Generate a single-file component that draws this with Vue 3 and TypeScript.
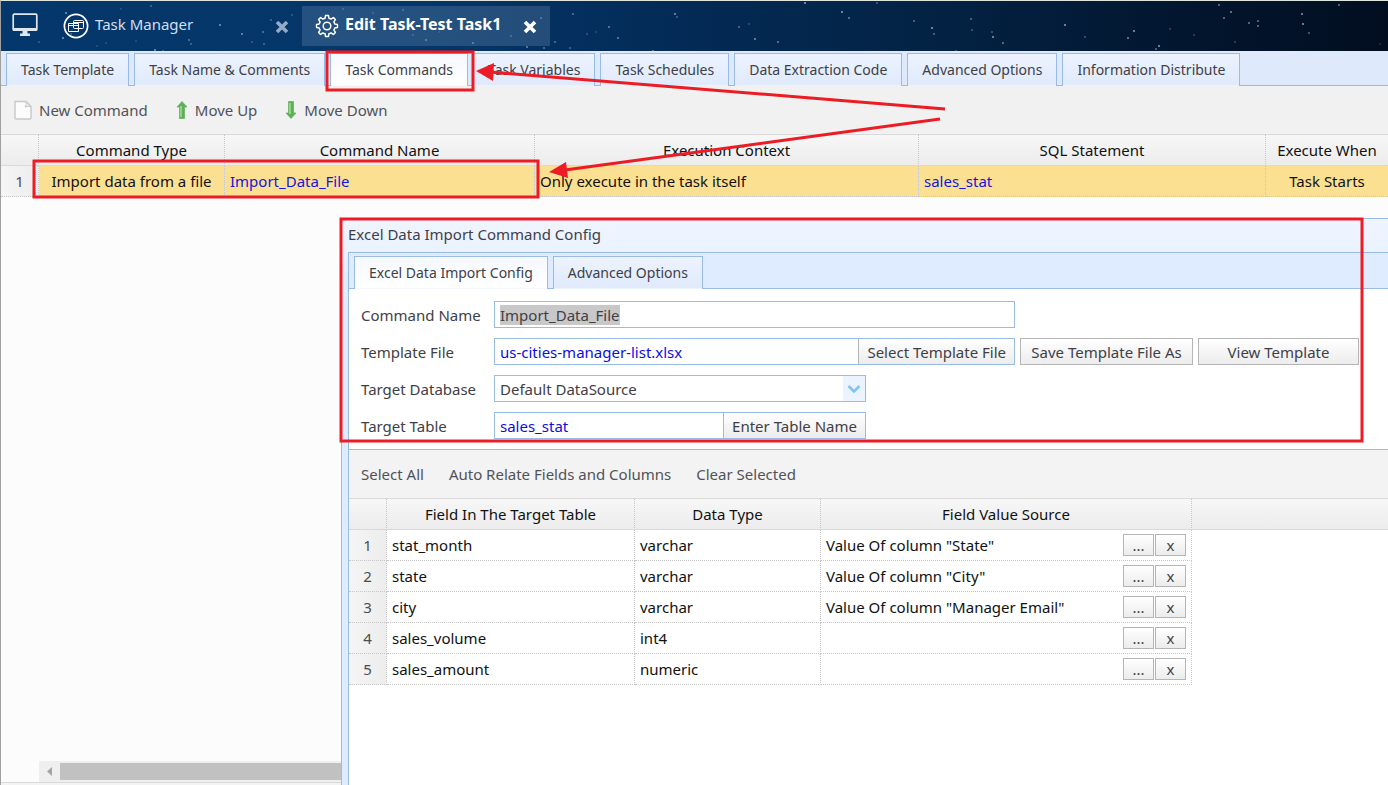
<script setup lang="ts">
import { onMounted, ref } from 'vue'

interface FieldRow {
  name: string
  type: string
  source: string
}

const taskTabs: string[] = [
  'Task Template',
  'Task Name & Comments',
  'Task Commands',
  'Task Variables',
  'Task Schedules',
  'Data Extraction Code',
  'Advanced Options',
  'Information Distribute',
]
const activeTab = ref('Task Commands')

const configTabs: string[] = ['Excel Data Import Config', 'Advanced Options']
const activeConfigTab = ref('Excel Data Import Config')

const fields: FieldRow[] = [
  { name: 'stat_month', type: 'varchar', source: 'Value Of column "State"' },
  { name: 'state', type: 'varchar', source: 'Value Of column "City"' },
  { name: 'city', type: 'varchar', source: 'Value Of column "Manager Email"' },
  { name: 'sales_volume', type: 'int4', source: '' },
  { name: 'sales_amount', type: 'numeric', source: '' },
]

const commandName = ref('Import_Data_File')
const templateFile = ref('us-cities-manager-list.xlsx')
const targetTable = ref('sales_stat')
const nameInput = ref<HTMLInputElement | null>(null)

// x, y, opacity of each star in the header sky
const stars: number[][] = [
  [65, 12, 0.7], [62, 37, 0.7], [70, 33, 0.4], [150, 5, 0.4], [219, 24, 0.7], [241, 33, 0.7],
  [270, 19, 0.4], [262, 31, 0.5], [251, 41, 0.3], [263, 43, 0.4], [188, 39, 0.5], [190, 43, 0.4],
  [154, 49, 0.7], [162, 50, 0.4], [135, 40, 0.2], [105, 42, 0.2], [120, 8, 0.2], [291, 14, 0.3],
  [38, 41, 0.3], [96, 45, 0.2], [342, 8, 0.3], [347, 22, 0.3], [372, 12, 0.3], [402, 9, 0.4],
  [425, 39, 0.6], [438, 31, 0.2], [412, 34, 0.3], [472, 42, 0.6], [510, 35, 0.4], [526, 46, 0.6],
  [543, 47, 0.5], [540, 17, 0.5], [572, 13, 0.5], [554, 41, 0.5], [569, 47, 0.4], [608, 26, 0.6],
  [617, 37, 0.6], [586, 33, 0.3], [595, 31, 0.2], [674, 13, 0.7], [676, 16, 0.4], [652, 50, 0.6],
  [738, 26, 0.5], [754, 38, 0.7], [748, 23, 0.3], [777, 41, 0.6], [804, 2, 0.8], [841, 11, 0.8],
  [848, 17, 0.6], [876, 2, 0.4], [913, 20, 0.5], [931, 27, 0.8], [933, 33, 0.5], [970, 18, 0.5],
  [971, 29, 0.4], [992, 36, 0.8], [1002, 42, 0.6], [991, 31, 0.4], [955, 50, 0.4], [1064, 24, 0.8],
  [1084, 36, 0.4], [1127, 37, 0.7], [1133, 30, 0.8], [1158, 45, 0.8], [1155, 48, 0.5],
  [1169, 28, 0.3], [1193, 34, 0.3], [1218, 4, 0.6], [1223, 17, 0.6], [1230, 11, 0.7],
  [1248, 22, 0.6], [1257, 20, 0.6], [1257, 25, 0.6], [1234, 41, 0.3], [1301, 13, 0.8],
  [1302, 23, 0.8], [1308, 32, 0.5], [1338, 4, 0.6], [1379, 43, 0.2],
]

const edgeMarks: number[] = [17, 72, 88, 122, 138, 172, 188, 238, 322, 338, 388, 497, 513, 547, 563]

const gearPath: string = Array.from({ length: 64 }, (_, i) => {
  const phase = (i % 8) / 8
  const r = phase < 0.5 ? 10.5 : 8
  const a = ((i - 1.5) / 64) * Math.PI * 2
  return `${i === 0 ? 'M' : 'L'}${(12 + r * Math.sin(a)).toFixed(1)} ${(12 - r * Math.cos(a)).toFixed(1)}`
}).join('') + 'Z'

onMounted(() => {
  nameInput.value?.focus()
  nameInput.value?.select()
})
</script>

<template>
  <div class="page">
    <header class="sky">
      <svg class="stars" aria-hidden="true">
        <circle v-for="(s, i) in stars" :key="i" :cx="s[0]" :cy="s[1]" r="0.9" fill="#bcd6f5" :opacity="s[2]" />
      </svg>
      <button class="desk" aria-label="Desktop">
        <svg width="26" height="24" viewBox="0 0 26 24">
          <rect x="1.2" y="1.2" width="23.6" height="16" rx="1" fill="none" stroke="#dfe6ee" stroke-width="1.7" />
          <path d="M1 15h24v2.5H1zM10.5 17h5v3.5H18V23H8v-2.5h2.500z" fill="#dfe6ee" />
        </svg>
      </button>
      <div class="win">
        <svg width="26" height="26" viewBox="0 0 26 26" fill="none" stroke="#fff" aria-hidden="true">
          <circle cx="13" cy="13" r="11.600" stroke-width="1.700" />
          <rect x="10.500" y="7.500" width="10" height="8" rx="1" />
          <path d="M10.500 9.500h10M5.500 10.500h10v8h-10zM5.500 12.500h10" />
        </svg>
        <span class="win-name">Task Manager</span>
        <button class="close" aria-label="Close Task Manager">
          <svg width="14" height="14" viewBox="0 0 14 14"><path d="M2 2l10 10M12 2L2 12" stroke="#93abc6" stroke-width="3.600" /></svg>
        </button>
      </div>
      <div class="win current">
        <svg width="24" height="24" viewBox="0 0 24 24" fill="none" stroke="#fff" aria-hidden="true">
          <path :d="gearPath" stroke-width="1.500" stroke-linejoin="round" />
          <circle cx="12" cy="12" r="3.800" stroke-width="1.500" />
        </svg>
        <span class="win-name">Edit Task-Test Task1</span>
        <button class="close" aria-label="Close Edit Task">
          <svg width="14" height="14" viewBox="0 0 14 14"><path d="M2 2l10 10M12 2L2 12" stroke="#fff" stroke-width="3.600" /></svg>
        </button>
      </div>
    </header>

    <nav class="tabs" aria-label="Task sections">
      <button v-for="t in taskTabs" :key="t" class="tab" :class="{ active: t === activeTab }" @click="activeTab = t">{{ t }}</button>
    </nav>

    <div class="toolbar">
      <button class="tool">
        <svg width="18" height="20" viewBox="0 0 18 20" aria-hidden="true">
          <path d="M1 1.500h11l5 5V18q0 1-1 1H2q-1 0-1-1z" fill="#fcfcfc" stroke="#c8c8c8" stroke-width="1.400" />
          <path d="M12 1.500q1 3-1 5.500 3-1.500 6 0z" fill="#eee" stroke="#c8c8c8" />
        </svg>
        New Command
      </button>
      <button class="tool">
        <svg width="12" height="18" viewBox="0 0 12 18" aria-hidden="true">
          <path d="M6 .5L11 6H8.500v11.500h-5V6H1z" fill="#5cb055" stroke="#68b363" stroke-width=".8" />
          <path d="M5 5v11" stroke="#a4dc9d" stroke-width="1.500" />
        </svg>
        Move Up
      </button>
      <button class="tool">
        <svg width="12" height="18" viewBox="0 0 12 18" aria-hidden="true">
          <path d="M6 17.500L1 12h2.500V.5h5V12H11z" fill="#5cb055" stroke="#68b363" stroke-width=".8" />
          <path d="M5 2v11" stroke="#a4dc9d" stroke-width="1.500" />
        </svg>
        Move Down
      </button>
    </div>

    <main class="work">
      <table class="grid commands">
        <colgroup><col class="c-num"><col class="c-type"><col class="c-name"><col class="c-context"><col class="c-sql"><col></colgroup>
        <thead>
          <tr><th></th><th>Command Type</th><th>Command Name</th><th>Execution Context</th><th>SQL Statement</th><th>Execute When</th></tr>
        </thead>
        <tbody>
          <tr class="picked">
            <td class="num">1</td>
            <td class="mid">Import data from a file</td>
            <td><a href="#">Import_Data_File</a></td>
            <td>Only execute in the task itself</td>
            <td><a href="#">sales_stat</a></td>
            <td class="mid">Task Starts</td>
          </tr>
        </tbody>
      </table>

      <div class="scrollbar" aria-hidden="true">
        <svg width="21" height="21" viewBox="0 0 21 21"><path d="M13 6v9l-5-4.500z" fill="#a3a3a3" /></svg>
        <span class="thumb"></span>
      </div>
      <div class="foot"></div>

      <section class="dialog" aria-label="Excel Data Import Command Config">
        <h2>Excel Data Import Command Config</h2>
        <div class="dialog-body">
          <nav class="tabs inner" aria-label="Config sections">
            <button v-for="t in configTabs" :key="t" class="tab" :class="{ active: t === activeConfigTab }" @click="activeConfigTab = t">{{ t }}</button>
          </nav>
          <form class="form" @submit.prevent>
            <label for="cmd">Command Name</label>
            <div class="line"><input id="cmd" ref="nameInput" v-model="commandName" class="box wide" type="text"></div>
            <label for="tpl">Template File</label>
            <div class="line">
              <div class="box wide combo">
                <input id="tpl" v-model="templateFile" type="text" readonly>
                <button type="button">Select Template File</button>
              </div>
              <button type="button" class="btn save">Save Template File As</button>
              <button type="button" class="btn view">View Template</button>
            </div>
            <label for="db">Target Database</label>
            <div class="line">
              <div class="box half combo">
                <select id="db"><option>Default DataSource</option></select>
                <span class="chev"><svg width="14" height="10" viewBox="0 0 14 10" aria-hidden="true"><path d="M1.500 2L7 7.500 12.500 2" fill="none" stroke="#7cc4f5" stroke-width="2.600" /></svg></span>
              </div>
            </div>
            <label for="tbl">Target Table</label>
            <div class="line">
              <div class="box half combo">
                <input id="tbl" v-model="targetTable" type="text" readonly>
                <button type="button">Enter Table Name</button>
              </div>
            </div>
          </form>
          <div class="toolbar fields-bar">
            <button class="tool">Select All</button>
            <button class="tool">Auto Relate Fields and Columns</button>
            <button class="tool">Clear Selected</button>
          </div>
          <div class="grid-wrap">
            <table class="grid fields">
              <colgroup><col class="c-num"><col class="c-field"><col class="c-dtype"><col class="c-source"></colgroup>
              <thead>
                <tr><th></th><th>Field In The Target Table</th><th>Data Type</th><th>Field Value Source</th></tr>
              </thead>
              <tbody>
                <tr v-for="(f, i) in fields" :key="f.name">
                  <td class="num">{{ i + 1 }}</td>
                  <td>{{ f.name }}</td>
                  <td>{{ f.type }}</td>
                  <td>
                    <div class="source">
                      <span>{{ f.source }}</span>
                      <button :aria-label="'Choose source for ' + f.name">...</button>
                      <button :aria-label="'Clear source of ' + f.name">x</button>
                    </div>
                  </td>
                </tr>
              </tbody>
            </table>
          </div>
        </div>
      </section>
    </main>

    <svg class="notes" aria-hidden="true">
      <rect v-for="y in edgeMarks" :key="y" x="0" :y="y" width="1" height="1" fill="#222" />
      <g fill="none" stroke="#ed1c24" stroke-width="3">
        <rect x="327" y="52" width="146" height="38" />
        <rect x="34" y="161" width="504" height="36" />
        <rect x="341" y="219" width="1021" height="222" />
        <path d="M945 109L490 72M940 119L565 170" />
      </g>
      <path d="M476 71l18-8-1 18zM549 172l17-10 2 16z" fill="#ed1c24" />
    </svg>
  </div>
</template>

<style>
html,
body,
#app {
  height: 100%;
}
body {
  margin: 0;
  overflow: hidden;
}
</style>

<style scoped>
* {
  box-sizing: border-box;
}
.page {
  position: relative;
  display: flex;
  flex-direction: column;
  min-height: 100vh;
  overflow: hidden;
  border-top: 1px solid #dfe5dc;
  border-left: 1px solid #a0a0a0;
  background: #fcfcfc;
  color: #3f4046;
  font: 15px/20px "Noto Sans", "Open Sans", sans-serif;
}
button,
input,
select {
  margin: 0;
  padding: 0;
  border: 0;
  background: none;
  color: inherit;
  font: inherit;
}
a {
  color: #1414e0;
  text-decoration: none;
}
.sky {
  position: relative;
  display: flex;
  height: 50px;
  padding-left: 11px;
  background: linear-gradient(90deg, #04376b 0%, #05366a 30%, #032b57 48%, #032345 66%, #02162f 85%, #020e20 100%);
}
.stars {
  position: absolute;
  inset: 0;
  width: 100%;
  height: 100%;
}
.desk {
  position: relative;
  display: flex;
  width: 42px;
  padding-top: 12px;
}
.win {
  position: relative;
  display: flex;
  align-items: center;
  width: 248px;
  height: 40px;
  margin-top: 5px;
  padding: 0 13px 0 9px;
  color: #d3dfee;
}
.win-name {
  flex: 1;
  margin-left: 6px;
  padding-bottom: 4px;
  white-space: nowrap;
}
.current {
  padding-left: 13px;
  background: rgba(112, 145, 180, 0.3);
  color: #fff;
  font-size: 16px;
  font-weight: 700;
}
.close {
  display: flex;
  padding-top: 2px;
}
.tabs {
  display: flex;
  gap: 5px;
  height: 35px;
  padding: 2px 5px 0;
  border-bottom: 1px solid #99bbe8;
  background: #deeafb;
}
.tab {
  height: 33px;
  padding: 0 14px;
  border: 1px solid #99bbe8;
  border-bottom-color: transparent;
  background: linear-gradient(#edf3fe, #dfeafc);
  font-size: 14px;
  white-space: nowrap;
}
.tab.active {
  background: linear-gradient(#f5f8fe, #fff);
}
.toolbar {
  display: flex;
  align-items: center;
  gap: 28px;
  height: 48px;
  padding: 0 13px;
  background: #f1f1f1;
}
.tool {
  display: flex;
  align-items: center;
  gap: 7px;
  color: #50525a;
  white-space: nowrap;
}
.work {
  position: relative;
  display: flex;
  flex: 1;
  flex-direction: column;
}
.grid {
  border-collapse: separate;
  border-spacing: 0;
  table-layout: fixed;
  color: #111;
}
.grid th {
  height: 32px;
  padding: 0;
  border-top: 1px solid #dadada;
  border-right: 1px dotted #c6c6c6;
  border-bottom: 1px solid #dadada;
  background: linear-gradient(#f7f7f7, #ececec);
  font-weight: 400;
}
.grid td {
  height: 31px;
  padding: 0 5px;
  border-right: 1px dotted #c6c6c6;
  border-bottom: 1px dotted #c6c6c6;
  white-space: nowrap;
}
.grid .num {
  padding: 0;
  background: linear-gradient(90deg, #f5f5f5, #ededed);
  color: #4c4c50;
  text-align: center;
}
.grid .mid {
  text-align: center;
}
.commands {
  width: 100%;
}
.commands th:last-child,
.commands td:last-child {
  border-right: 0;
}
.picked td {
  background: #fce092;
}
.c-num {
  width: 38px;
}
.c-type {
  width: 186px;
}
.c-name {
  width: 310px;
}
.c-context {
  width: 384px;
}
.c-sql {
  width: 347px;
}
.scrollbar {
  display: flex;
  height: 21px;
  margin: auto 0 0 38px;
  background: #efefef;
}
.thumb {
  flex: 1;
  margin: 2px 0;
  background: #c1c1c1;
}
.foot {
  height: 3px;
  border-top: 1px solid #dadada;
  background: #f3f3f3;
}
.dialog {
  position: absolute;
  inset: 84px 0 0 340px;
  display: flex;
  flex-direction: column;
  padding-left: 6px;
  border-top: 1px solid #99bbe8;
  border-left: 1px solid #99bbe8;
  background: linear-gradient(#eff5ff, #eaf2ff 34px, #dfebff 60px);
}
.dialog h2 {
  height: 33px;
  margin: 0;
  font-size: 15px;
  font-weight: 400;
  line-height: 30px;
}
.dialog-body {
  display: flex;
  flex: 1;
  flex-direction: column;
  border-top: 1px solid #99bbe8;
  border-left: 1px solid #99bbe8;
  background: #fff;
}
.inner {
  height: 36px;
  padding-top: 3px;
  background: #dfebff;
}
.form {
  display: grid;
  grid-template-columns: 133px 1fr;
  grid-auto-rows: 27px;
  row-gap: 10px;
  align-items: center;
  padding: 12px 12px 10px;
}
.line {
  display: flex;
  gap: 5px;
}
.box {
  height: 27px;
  border: 1px solid #99bbe8;
}
.wide {
  width: 521px;
}
.half {
  width: 372px;
}
input.box,
.combo input,
.combo select {
  padding: 0 5px;
  outline: 0;
}
input::selection {
  background: #c8c8c8;
  color: #3f4046;
}
.combo {
  display: flex;
}
.combo input,
.combo select {
  flex: 1;
  min-width: 0;
  color: #0c0ce6;
}
.combo select {
  appearance: none;
  color: inherit;
}
.combo button {
  padding: 0 8px;
  border-left: 1px solid #b5b5b5;
  background: linear-gradient(#fff, #ececec);
}
.chev {
  display: flex;
  align-items: center;
  justify-content: center;
  width: 22px;
  background: #eaf3ff;
}
.btn {
  height: 27px;
  border: 1px solid #b5b5b5;
  background: linear-gradient(#fff, #ececec);
  white-space: nowrap;
}
.save {
  width: 173px;
}
.view {
  width: 161px;
}
.fields-bar {
  gap: 25px;
  height: 49px;
  padding: 0 12px;
  border-top: 1px solid #99bbe8;
  background: #f3f3f3;
}
.grid-wrap {
  background: linear-gradient(#dadada 1px, #f7f7f7 1px, #ececec 31px, #dadada 31px, #dadada 32px, #fff 32px);
}
.fields {
  width: 843px;
}
.c-field {
  width: 248px;
}
.c-dtype {
  width: 186px;
}
.source {
  display: flex;
  align-items: center;
  gap: 1px;
}
.source span {
  flex: 1;
}
.source button {
  width: 31px;
  height: 22px;
  border: 1px solid #b5b5b5;
  background: linear-gradient(#fff, #ececec);
  color: #3f4046;
}
.notes {
  position: absolute;
  top: -1px;
  left: -1px;
  width: calc(100% + 1px);
  height: calc(100% + 1px);
  pointer-events: none;
}
</style>
